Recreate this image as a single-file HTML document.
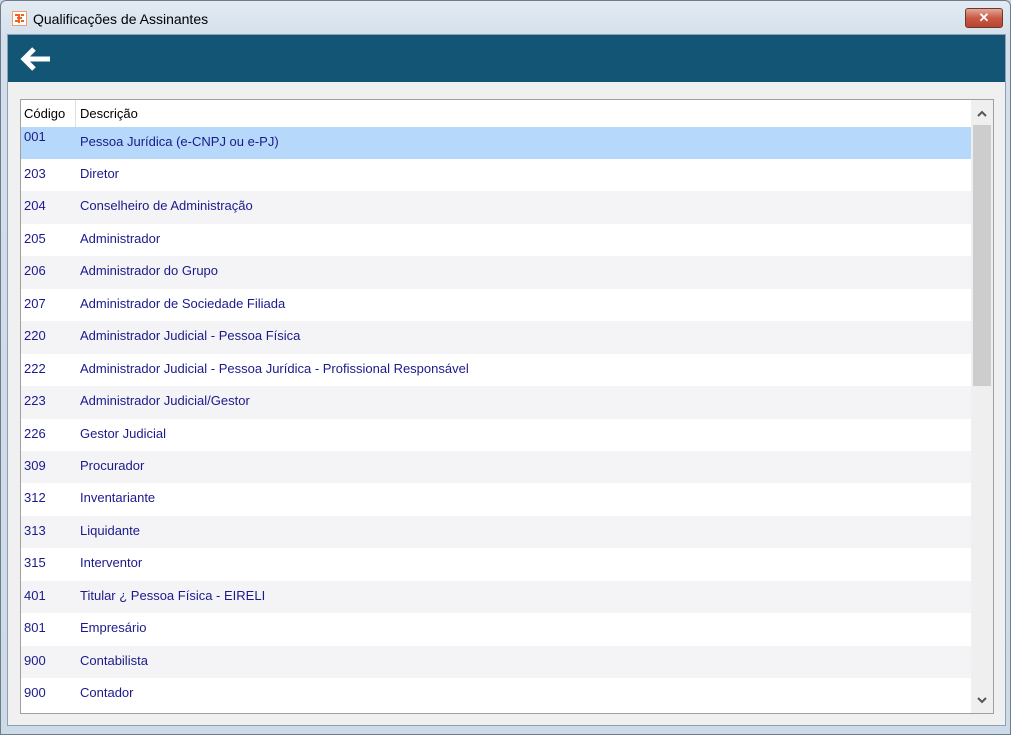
<!DOCTYPE html>
<html><head><meta charset="utf-8"><style>
*{margin:0;padding:0;box-sizing:border-box}
body{width:1011px;height:735px;overflow:hidden;background:#c9d6e3;font-family:"Liberation Sans",sans-serif;position:relative}
.frame{position:absolute;left:0;top:0;width:1011px;height:735px;border:1px solid #6d7d8d;border-radius:6px 6px 0 0;background:linear-gradient(#e3eaf2,#d3dfeb 40px,#cddae7);}
.title{position:absolute;left:33px;top:11px;font-size:14px;color:#000}
.icon{position:absolute;left:12px;top:11px;width:15px;height:15px;background:#fff;border:1px solid #e8a070}
.close{position:absolute;left:965px;top:8px;width:38px;height:20px;border:1px solid #6a3a30;border-radius:3px;background:linear-gradient(#e4a898,#c85a45 50%,#b84530);color:#fff;font-size:13px;font-weight:bold;text-align:center;line-height:18px}
.inner{position:absolute;left:7px;top:34px;width:999px;height:692px;background:#f0f0f0;border:1px solid #8ea0b4}
.hdr{position:absolute;left:8px;top:35px;width:997px;height:47px;background:#135574}
.tbl{position:absolute;left:20px;top:99px;width:974px;height:615px;border:1px solid #a0a0a0;background:#fff;overflow:hidden}
.th{position:absolute;top:0;height:27px;font-size:13px;line-height:27px;color:#000}
.row{position:absolute;left:0;width:950px;height:32.5px;font-size:13px;color:#1a1a8c}
.row span{position:absolute;top:0;line-height:29px}
.sb{position:absolute;left:950px;top:0;width:22px;height:613px;background:#efefef}
</style></head><body>
<div class="frame"></div>
<div class="icon"><svg width="13" height="13" viewBox="0 0 13 13"><path d="M2 3h3M8 3h3M4 6h5M2 9h3M8 9h3M6 2v9" stroke="#f06020" stroke-width="2"/></svg></div>
<div class="title">Qualificações de Assinantes</div>
<div class="close">✕</div>
<div class="inner"></div>
<div class="hdr"><svg style="position:absolute;left:9px;top:10px" width="36" height="28" viewBox="0 0 36 28"><path d="M33 14H7M17 4L7 14l10 10" stroke="#fff" stroke-width="5" fill="none" stroke-linejoin="miter"/></svg></div>
<div class="tbl">
<div class="th" style="left:3px">Código</div>
<div style="position:absolute;left:54px;top:0;width:1px;height:27px;background:#e0e0e0"></div>
<div class="th" style="left:59px">Descrição</div>
<div id="rows"></div>
<div class="sb">
<svg style="position:absolute;left:6px;top:10px" width="10" height="7"><path d="M1 6l4-4 4 4" stroke="#555" stroke-width="2" fill="none"/></svg>
<div style="position:absolute;left:2px;top:25px;width:18px;height:261px;background:#cdcdcd"></div>
<svg style="position:absolute;left:6px;top:597px" width="10" height="7"><path d="M1 1l4 4 4-4" stroke="#555" stroke-width="2" fill="none"/></svg>
</div>
</div>
<script>
var d=[["001","Pessoa Jurídica (e-CNPJ ou e-PJ)"],["203","Diretor"],["204","Conselheiro de Administração"],["205","Administrador"],["206","Administrador do Grupo"],["207","Administrador de Sociedade Filiada"],["220","Administrador Judicial - Pessoa Física"],["222","Administrador Judicial - Pessoa Jurídica - Profissional Responsável"],["223","Administrador Judicial/Gestor"],["226","Gestor Judicial"],["309","Procurador"],["312","Inventariante"],["313","Liquidante"],["315","Interventor"],["401","Titular ¿ Pessoa Física - EIRELI"],["801","Empresário"],["900","Contabilista"],["900","Contador"]];
var h="";d.forEach(function(r,i){var bg=i==0?"#b5d8fb":(i%2==0?"#f4f4f7":"#fff");var t=i==0?-5:0;h+='<div class="row" style="top:'+(26.5+i*32.45)+'px;background:'+bg+'"><span style="left:3px;top:'+t+'px">'+r[0]+'</span><span style="left:59px">'+r[1]+'</span></div>';});
document.getElementById("rows").innerHTML=h;
</script>
</body></html>
